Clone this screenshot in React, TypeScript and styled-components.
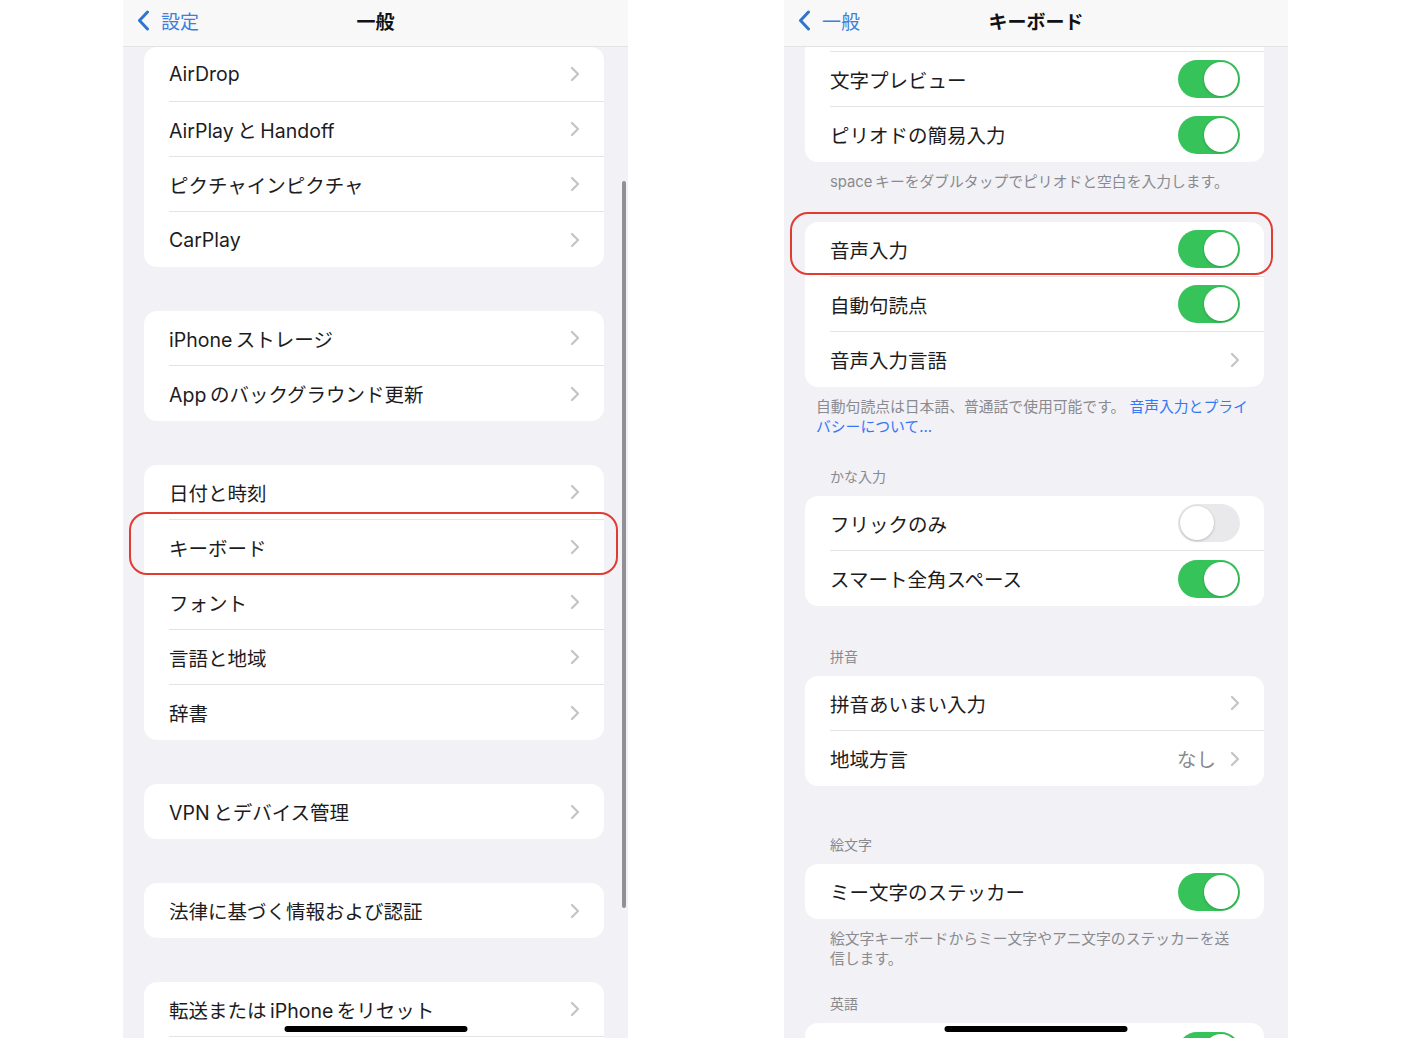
import React from 'react';
import styled, { createGlobalStyle } from 'styled-components';

const GlobalStyle = createGlobalStyle`
  html, body {
    margin: 0;
    padding: 0;
    background: #ffffff;
  }
  body {
    font-family: Inter, "Noto Sans CJK JP", sans-serif;
    -webkit-font-smoothing: antialiased;
  }
`;

const Page = styled.div`
  display: flex;
  align-items: flex-start;
  gap: 156px;
  padding-left: 123px;
  width: 1408px;
  height: 1058px;
  box-sizing: border-box;
`;

const Phone = styled.div<{ $width: number }>`
  position: relative;
  width: ${({ $width }) => $width}px;
  height: 1038px;
  background: #f1f1f6;
  overflow: hidden;
  display: flex;
  flex-direction: column;
  flex: none;
`;

const NavBar = styled.header`
  flex: none;
  height: 47px;
  padding: 0 14px 6px;
  box-sizing: border-box;
  background: #f8f8f9;
  border-bottom: 1px solid #e3e3e6;
  display: grid;
  grid-template-columns: 1fr auto 1fr;
  align-items: center;
`;

const BackButton = styled.div`
  display: flex;
  align-items: center;
  gap: 11px;
  color: #3d7fd9;
  font-size: 19px;
`;

const NavTitle = styled.div`
  font-size: 19px;
  font-weight: 700;
  color: #121214;
`;

const Content = styled.div<{ $left: number }>`
  display: flex;
  flex-direction: column;
  padding: 0 24px 0 ${({ $left }) => $left}px;
`;

const Section = styled.section<{ $gap: number }>`
  margin-top: ${({ $gap }) => $gap}px;
`;

const GroupTitle = styled.div`
  padding: 0 25px 10px;
  font-size: 14px;
  line-height: 18px;
  color: #8a8a8e;
`;

const Card = styled.div<{ $flatTop?: boolean }>`
  background: #ffffff;
  border-radius: ${({ $flatTop }) => ($flatTop ? '0 0 13px 13px' : '13px')};
  padding-top: ${({ $flatTop }) => ($flatTop ? 4 : 0)}px;
`;

const TopRule = styled.div`
  margin-left: 25px;
  border-top: 1px solid #e4e4e7;
`;

const Row = styled.div`
  position: relative;
  height: 55px;
  padding-left: 25px;
  display: flex;
`;

const RowBody = styled.div<{ $divider: boolean }>`
  flex: 1;
  display: flex;
  align-items: center;
  justify-content: space-between;
  padding-right: 24px;
  border-bottom: ${({ $divider }) => ($divider ? '1px solid #e4e4e7' : 'none')};
`;

const Label = styled.span`
  font-size: 19.5px;
  color: #1c1c1e;
  white-space: nowrap;
`;

const Accessory = styled.span`
  display: flex;
  align-items: center;
  gap: 14px;
`;

const Value = styled.span`
  font-size: 19.5px;
  color: #8a8a8e;
`;

const Switch = styled.span<{ $on: boolean }>`
  display: flex;
  justify-content: ${({ $on }) => ($on ? 'flex-end' : 'flex-start')};
  align-items: center;
  width: 62px;
  height: 38px;
  padding: 2px;
  box-sizing: border-box;
  border-radius: 19px;
  background: ${({ $on }) => ($on ? '#36c35a' : '#e9e9eb')};
`;

const Knob = styled.span`
  width: 34px;
  height: 34px;
  border-radius: 50%;
  background: #ffffff;
  box-shadow: 0 1px 3px rgba(0, 0, 0, 0.18), 0 0 0 0.5px rgba(0, 0, 0, 0.05);
`;

const Highlight = styled.div<{ $inset: string }>`
  position: absolute;
  inset: ${({ $inset }) => $inset};
  border: 2.5px solid #e23b30;
  border-radius: 18px;
  pointer-events: none;
  z-index: 2;
`;

const Footnote = styled.p<{ $indent: number; $right: number }>`
  margin: 0;
  padding: 10px ${({ $right }) => $right}px 0 ${({ $indent }) => $indent}px;
  font-size: 14.8px;
  line-height: 20px;
  color: #8a8a8e;
`;

const FootLink = styled.span`
  color: #3478f6;
`;

const ScrollIndicator = styled.div`
  position: absolute;
  left: 499px;
  top: 181px;
  width: 4px;
  height: 727px;
  border-radius: 2px;
  background: #909095;
`;

const HomeIndicator = styled.div`
  position: absolute;
  bottom: 6px;
  left: 50%;
  transform: translateX(-50%);
  width: 183px;
  height: 6px;
  border-radius: 3px;
  background: #000000;
`;

const BackChevron = () => (
  <svg width="13" height="21" viewBox="0 0 13 21">
    <path d="M10.5 2 L2.5 10.5 L10.5 19" fill="none" stroke="#2f74d0" strokeWidth="3" strokeLinecap="round" strokeLinejoin="round" />
  </svg>
);

const Chevron = () => (
  <svg width="10" height="16" viewBox="0 0 10 16">
    <path d="M2 2 L8 8 L2 14" fill="none" stroke="#c4c4c7" strokeWidth="2.2" strokeLinecap="round" strokeLinejoin="round" />
  </svg>
);

interface RowData {
  label: string;
  toggle?: boolean;
  value?: string;
  highlight?: string;
}

interface SectionData {
  title?: string;
  gap: number;
  rows: RowData[];
  flatTop?: boolean;
  note?: React.ReactNode;
  noteIndent?: number;
  noteRight?: number;
}

// thin space between latin words and kana, like iOS spacing
const t = '\u2009';

const SettingsRow: React.FC<{ row: RowData; divider: boolean }> = ({ row, divider }) => (
  <Row>
    {row.highlight && <Highlight $inset={row.highlight} />}
    <RowBody $divider={divider}>
      <Label>{row.label}</Label>
      <Accessory>
        {row.value && <Value>{row.value}</Value>}
        {row.toggle === undefined ? (
          <Chevron />
        ) : (
          <Switch $on={row.toggle}>
            <Knob />
          </Switch>
        )}
      </Accessory>
    </RowBody>
  </Row>
);

const SettingsSection: React.FC<{ section: SectionData }> = ({ section }) => (
  <Section $gap={section.gap}>
    {section.title && <GroupTitle>{section.title}</GroupTitle>}
    <Card $flatTop={section.flatTop}>
      {section.flatTop && <TopRule />}
      {section.rows.map((row, i) => (
        <SettingsRow key={i} row={row} divider={i < section.rows.length - 1} />
      ))}
    </Card>
    {section.note && (
      <Footnote $indent={section.noteIndent ?? 25} $right={section.noteRight ?? 24}>
        {section.note}
      </Footnote>
    )}
  </Section>
);

const generalSections: SectionData[] = [
  { gap: 0, rows: [{ label: 'AirDrop' }, { label: `AirPlay${t}と${t}Handoff` }, { label: 'ピクチャインピクチャ' }, { label: 'CarPlay' }] },
  { gap: 44, rows: [{ label: `iPhone${t}ストレージ` }, { label: `App${t}のバックグラウンド更新` }] },
  {
    gap: 44,
    rows: [
      { label: '日付と時刻' },
      { label: 'キーボード', highlight: '-8px -14px 0 -15px' },
      { label: 'フォント' },
      { label: '言語と地域' },
      { label: '辞書' },
    ],
  },
  { gap: 44, rows: [{ label: `VPN${t}とデバイス管理` }] },
  { gap: 44, rows: [{ label: '法律に基づく情報および認証' }] },
  // the next row of this group scrolls out below the screen edge
  { gap: 44, rows: [{ label: `転送または${t}iPhone${t}をリセット` }, { label: '' }] },
];

const keyboardSections: SectionData[] = [
  {
    gap: 0,
    flatTop: true,
    rows: [
      { label: '文字プレビュー', toggle: true },
      { label: 'ピリオドの簡易入力', toggle: true },
    ],
    note: `space${t}キーをダブルタップでピリオドと空白を入力します。`,
  },
  {
    gap: 30,
    rows: [
      { label: '音声入力', toggle: true, highlight: '-10px -9px 2px -15px' },
      { label: '自動句読点', toggle: true },
      { label: '音声入力言語' },
    ],
    note: (
      <>
        自動句読点は日本語、普通話で使用可能です。 <FootLink>音声入力とプライバシーについて…</FootLink>
      </>
    ),
    noteIndent: 11,
    noteRight: 6,
  },
  {
    gap: 31,
    title: 'かな入力',
    rows: [
      { label: 'フリックのみ', toggle: false },
      { label: 'スマート全角スペース', toggle: true },
    ],
  },
  {
    gap: 42,
    title: '拼音',
    rows: [{ label: '拼音あいまい入力' }, { label: '地域方言', value: 'なし' }],
  },
  {
    gap: 50,
    title: '絵文字',
    rows: [{ label: 'ミー文字のステッカー', toggle: true }],
    note: '絵文字キーボードからミー文字やアニ文字のステッカーを送信します。',
  },
  {
    gap: 26,
    title: '英語',
    // label sits below the visible screen edge; only the switch top shows
    rows: [{ label: '', toggle: true }],
  },
];

export default function App() {
  return (
    <>
      <GlobalStyle />
      <Page>
        <Phone $width={505}>
          <NavBar>
            <BackButton>
              <BackChevron />
              設定
            </BackButton>
            <NavTitle>一般</NavTitle>
            <span />
          </NavBar>
          <Content $left={21}>
            {generalSections.map((s, i) => (
              <SettingsSection key={i} section={s} />
            ))}
          </Content>
          <ScrollIndicator />
          <HomeIndicator />
        </Phone>

        <Phone $width={504}>
          <NavBar>
            <BackButton>
              <BackChevron />
              一般
            </BackButton>
            <NavTitle>キーボード</NavTitle>
            <span />
          </NavBar>
          <Content $left={21}>
            {keyboardSections.map((s, i) => (
              <SettingsSection key={i} section={s} />
            ))}
          </Content>
          <HomeIndicator />
        </Phone>
      </Page>
    </>
  );
}
